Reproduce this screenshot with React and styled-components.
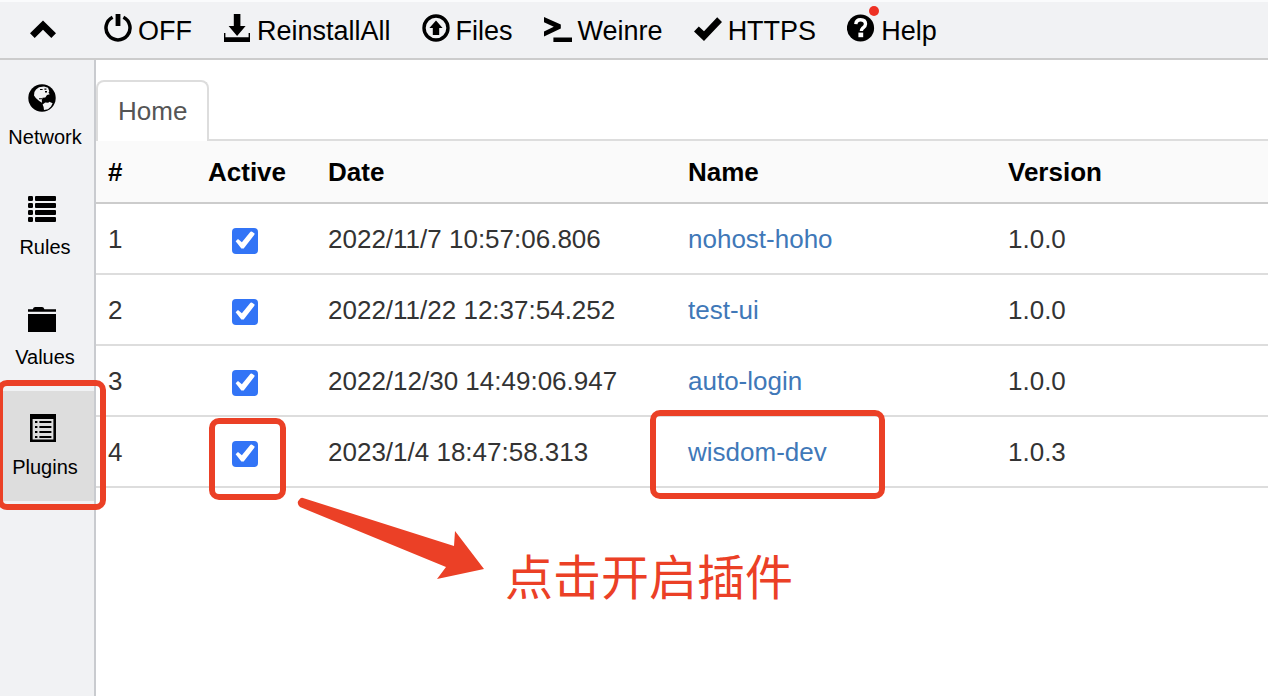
import React from "react";
import styled, { createGlobalStyle } from "styled-components";

const GlobalStyle = createGlobalStyle`
  * { box-sizing: border-box; }
  body {
    margin: 0;
    background: #fff;
    color: #333;
    font-family: "Liberation Sans", Arial, sans-serif;
    font-size: 26px;
  }
`;

const Page = styled.div`
  position: relative;
  display: flex;
  flex-direction: column;
  min-height: 100vh;
  overflow: hidden;
`;

const Toolbar = styled.header`
  display: flex;
  align-items: center;
  height: 60px;
  background: #f1f2f4;
  border-top: 2px solid #fafbfc;
  border-bottom: 2px solid #ccc;
`;

const CollapseButton = styled.button`
  display: flex;
  justify-content: center;
  width: 86px;
  margin-right: 18px;
  padding: 0;
  border: 0;
  background: none;
  color: #000;
`;

const Actions = styled.div`
  display: flex;
  gap: 31px;
`;

const ToolButton = styled.button`
  position: relative;
  display: flex;
  align-items: flex-start;
  gap: 6px;
  padding: 0;
  border: 0;
  background: none;
  color: #000;
  font: 27px/32px "Liberation Sans", Arial, sans-serif;
  white-space: nowrap;
`;

const ToolLabel = styled.span`
  padding-top: 1px;
`;

const Dot = styled.span`
  position: absolute;
  top: -8px;
  left: 22px;
  width: 10px;
  height: 10px;
  border-radius: 50%;
  background: #ee3124;
`;

const Icon = styled.svg`
  display: block;
  flex: none;
  width: 28px;
  height: 28px;
  fill: currentColor;
`;

const Body = styled.div`
  display: flex;
  flex: 1;
`;

const Sidebar = styled.nav`
  flex: none;
  width: 96px;
  padding-top: 1px;
  background: #f1f2f4;
  border-right: 2px solid #c9cbcf;
`;

const NavItem = styled.a`
  display: flex;
  flex-direction: column;
  align-items: center;
  gap: 13px;
  height: 110px;
  padding: 23px 4px 0 0;
  background: ${(p) => (p.$active ? "#ddd" : "transparent")};
  color: #000;
  font-size: 20px;
  line-height: 24px;
  text-decoration: none;

  ${Icon} {
    margin-right: 6px;
  }
`;

const Main = styled.main`
  flex: 1;
  min-width: 0;
  padding-top: 20px;
`;

const Tabs = styled.div`
  display: flex;
  height: 61px;
  border-bottom: 2px solid #ddd;
`;

const Tab = styled.button`
  height: 61px;
  padding: 0 20px 2px;
  border: 2px solid #ddd;
  border-bottom: 0;
  border-radius: 8px 8px 0 0;
  background: #fff;
  color: #555;
  font: 26px/30px "Liberation Sans", Arial, sans-serif;
`;

const Table = styled.table`
  width: 100%;
  border-collapse: separate;
  border-spacing: 0;
  table-layout: fixed;
`;

const Col = styled.col`
  width: ${(p) => p.$width || "auto"};
`;

const HeadCell = styled.th`
  height: 63px;
  padding: 2px 12px 0;
  border-bottom: 2px solid #ccc;
  background: #fafafa;
  color: #000;
  text-align: left;
  white-space: nowrap;
`;

const Cell = styled.td`
  height: 71px;
  padding: 2px 12px 0;
  border-bottom: 2px solid #ddd;
  white-space: nowrap;
`;

const CheckCell = styled(Cell)`
  padding: 4px 34px 0 12px;
`;

const Checkbox = styled.input`
  appearance: none;
  display: block;
  width: 26px;
  height: 26px;
  margin: 0 auto;
  border-radius: 4px;
  background: #3274f6;

  &:checked::before {
    content: "";
    display: block;
    width: 26px;
    height: 26px;
    background: #fff;
    clip-path: polygon(14% 53%, 23% 44%, 38% 57%, 71% 16%, 76% 15%, 87% 23%, 86% 28%, 45% 81%, 36% 81%);
  }
`;

const PluginLink = styled.a`
  color: #4078b8;
  text-decoration: none;
`;

const Overlay = styled.div`
  position: absolute;
  inset: 0;
  pointer-events: none;
  color: #eb4026;
`;

const Highlight = styled.div`
  position: absolute;
  left: ${(p) => p.$x}px;
  top: ${(p) => p.$y}px;
  width: ${(p) => p.$w}px;
  height: ${(p) => p.$h}px;
  border: 6px solid currentColor;
  border-radius: 10px;
`;

const Arrow = styled.svg`
  position: absolute;
  left: 296px;
  top: 496px;
  width: 190px;
  height: 84px;
  fill: currentColor;
`;

const Note = styled.p`
  position: absolute;
  left: 505px;
  top: 544px;
  margin: 0;
  font: 48px/60px "Noto Sans CJK SC", sans-serif;
  white-space: nowrap;
`;

const icons = {
  up: <path d="M14 4.5 27 17.2 22.3 22 14 13.8 5.7 22 1 17.2z" />,
  power: (
    <>
      <path
        d="M8.6 3.2A12 12 0 1 0 19.4 3.2"
        fill="none"
        stroke="currentColor"
        strokeWidth="3.5"
      />
      <path d="M11.6 0h4.8v12h-4.8z" />
    </>
  ),
  download: (
    <path d="M10.8 0h6.6v12h5.2l-8.5 10-8.5-10h5.2zM1 19h1.4v4.2h23.2V19H27v9H1z" />
  ),
  upload: (
    <>
      <circle cx="14" cy="14" r="12" fill="none" stroke="currentColor" strokeWidth="3.4" />
      <path d="m14 6.4 6.6 7.6h-3.4v7h-6.4v-7H7.4z" />
    </>
  ),
  terminal: <path d="M0 3l16.8 7.6v4L0 22.6v-5.2l9.8-4.7L0 8.2zM9.4 23.6H28V28H9.4z" />,
  check: <path d="M0 17.6 4.8 12.6l5.2 4.6L23.2 3.2 28 8 10 27z" />,
  help: (
    <>
      <circle cx="13.5" cy="14" r="13.6" />
      <path
        d="M8.8 10.2c.3-3.2 2.2-4.4 4.8-4.4 3 0 4.9 1.6 4.9 4.3 0 2.5-1.8 3.3-3.1 4.4-.9.8-1 1.4-1 2.6"
        fill="none"
        stroke="#fff"
        strokeWidth="3.4"
      />
      <path d="M11.4 18.6h4.8v4.6h-4.8z" fill="#fff" />
    </>
  ),
  globe: (
    <>
      <circle cx="14" cy="14" r="13.7" />
      <path
        d="M8 5.4 11 3.2 16 2.6l4 1.2 1.3 3.4-.8 1.6 1.3 1.4-2.8.8-1.7 2.6-2.8.2-.7 2.4.2 2.6-2.8-1.8L7.8 14 6 11.4 6.4 8zM14.6 20.6l2.6-2.2 3 .4 1.2-1 3.2 1.4-1.6 3.4-3 2.6-4 .8-.4-3z"
        fill="#f1f2f4"
      />
      <path d="M12 5h2.6v1H12zM16.4 4.6h2v1.2h-2zM17 7h2v1.4h-2zM11 14.2h3v1h-3z" />
    </>
  ),
  list: (
    <>
      {[2, 9, 16, 23].map((y) => (
        <React.Fragment key={y}>
          <rect x="0" y={y} width="5" height="5" rx="1.2" />
          <rect x="7" y={y} width="21" height="5" rx="1" />
        </React.Fragment>
      ))}
    </>
  ),
  folder: (
    <path d="M0 5.2h4.8q.6-2.2 2.4-2.2h6.8q1.8 0 2.4 2.2H28v2.6H0zM0 10h28v18H0z" />
  ),
  plugins: (
    <>
      <path d="M2 0h26v28H2zM4.6 5v20.4h20.8V5z" fillRule="evenodd" />
      {[7, 12, 17, 22].map((y) => (
        <path key={y} d={`M7 ${y}h2.4v2H7zM11.4 ${y}h12v2h-12z`} />
      ))}
    </>
  ),
};

const Glyph = ({ name }) => (
  <Icon viewBox="0 0 28 28" aria-hidden="true">
    {icons[name]}
  </Icon>
);

const actions = [
  { icon: "power", label: "OFF" },
  { icon: "download", label: "ReinstallAll" },
  { icon: "upload", label: "Files" },
  { icon: "terminal", label: "Weinre" },
  { icon: "check", label: "HTTPS" },
  { icon: "help", label: "Help", dot: true },
];

const navItems = [
  { icon: "globe", label: "Network" },
  { icon: "list", label: "Rules" },
  { icon: "folder", label: "Values" },
  { icon: "plugins", label: "Plugins", active: true },
];

const plugins = [
  { date: "2022/11/7 10:57:06.806", name: "nohost-hoho", version: "1.0.0" },
  { date: "2022/11/22 12:37:54.252", name: "test-ui", version: "1.0.0" },
  { date: "2022/12/30 14:49:06.947", name: "auto-login", version: "1.0.0" },
  { date: "2023/1/4 18:47:58.313", name: "wisdom-dev", version: "1.0.3" },
];

export default function App() {
  return (
    <Page>
      <GlobalStyle />
      <Toolbar>
        <CollapseButton aria-label="Collapse">
          <Glyph name="up" />
        </CollapseButton>
        <Actions>
          {actions.map((a) => (
            <ToolButton key={a.label}>
              <Glyph name={a.icon} />
              <ToolLabel>{a.label}</ToolLabel>
              {a.dot && <Dot />}
            </ToolButton>
          ))}
        </Actions>
      </Toolbar>
      <Body>
        <Sidebar>
          {navItems.map((n) => (
            <NavItem key={n.label} href="#" $active={n.active}>
              <Glyph name={n.icon} />
              <span>{n.label}</span>
            </NavItem>
          ))}
        </Sidebar>
        <Main>
          <Tabs>
            <Tab>Home</Tab>
          </Tabs>
          <Table>
            <colgroup>
              <Col $width="100px" />
              <Col $width="120px" />
              <Col $width="360px" />
              <Col $width="320px" />
              <Col />
            </colgroup>
            <thead>
              <tr>
                <HeadCell>#</HeadCell>
                <HeadCell>Active</HeadCell>
                <HeadCell>Date</HeadCell>
                <HeadCell>Name</HeadCell>
                <HeadCell>Version</HeadCell>
              </tr>
            </thead>
            <tbody>
              {plugins.map((p, i) => (
                <tr key={p.name}>
                  <Cell>{i + 1}</Cell>
                  <CheckCell>
                    <Checkbox type="checkbox" defaultChecked aria-label={p.name} />
                  </CheckCell>
                  <Cell>{p.date}</Cell>
                  <Cell>
                    <PluginLink href="#">{p.name}</PluginLink>
                  </Cell>
                  <Cell>{p.version}</Cell>
                </tr>
              ))}
            </tbody>
          </Table>
        </Main>
      </Body>
      <Overlay>
        <Highlight $x={-3} $y={380} $w={109} $h={130} />
        <Highlight $x={209} $y={418} $w={77} $h={82} />
        <Highlight $x={650} $y={410} $w={235} $h={89} />
        <Arrow viewBox="0 0 190 84" aria-hidden="true">
          <path d="M7 2 158 50 159 35 188 73 141 83 150 71 4 11Q0 7 3 4 5 1 7 2z" />
        </Arrow>
        <Note>点击开启插件</Note>
      </Overlay>
    </Page>
  );
}
